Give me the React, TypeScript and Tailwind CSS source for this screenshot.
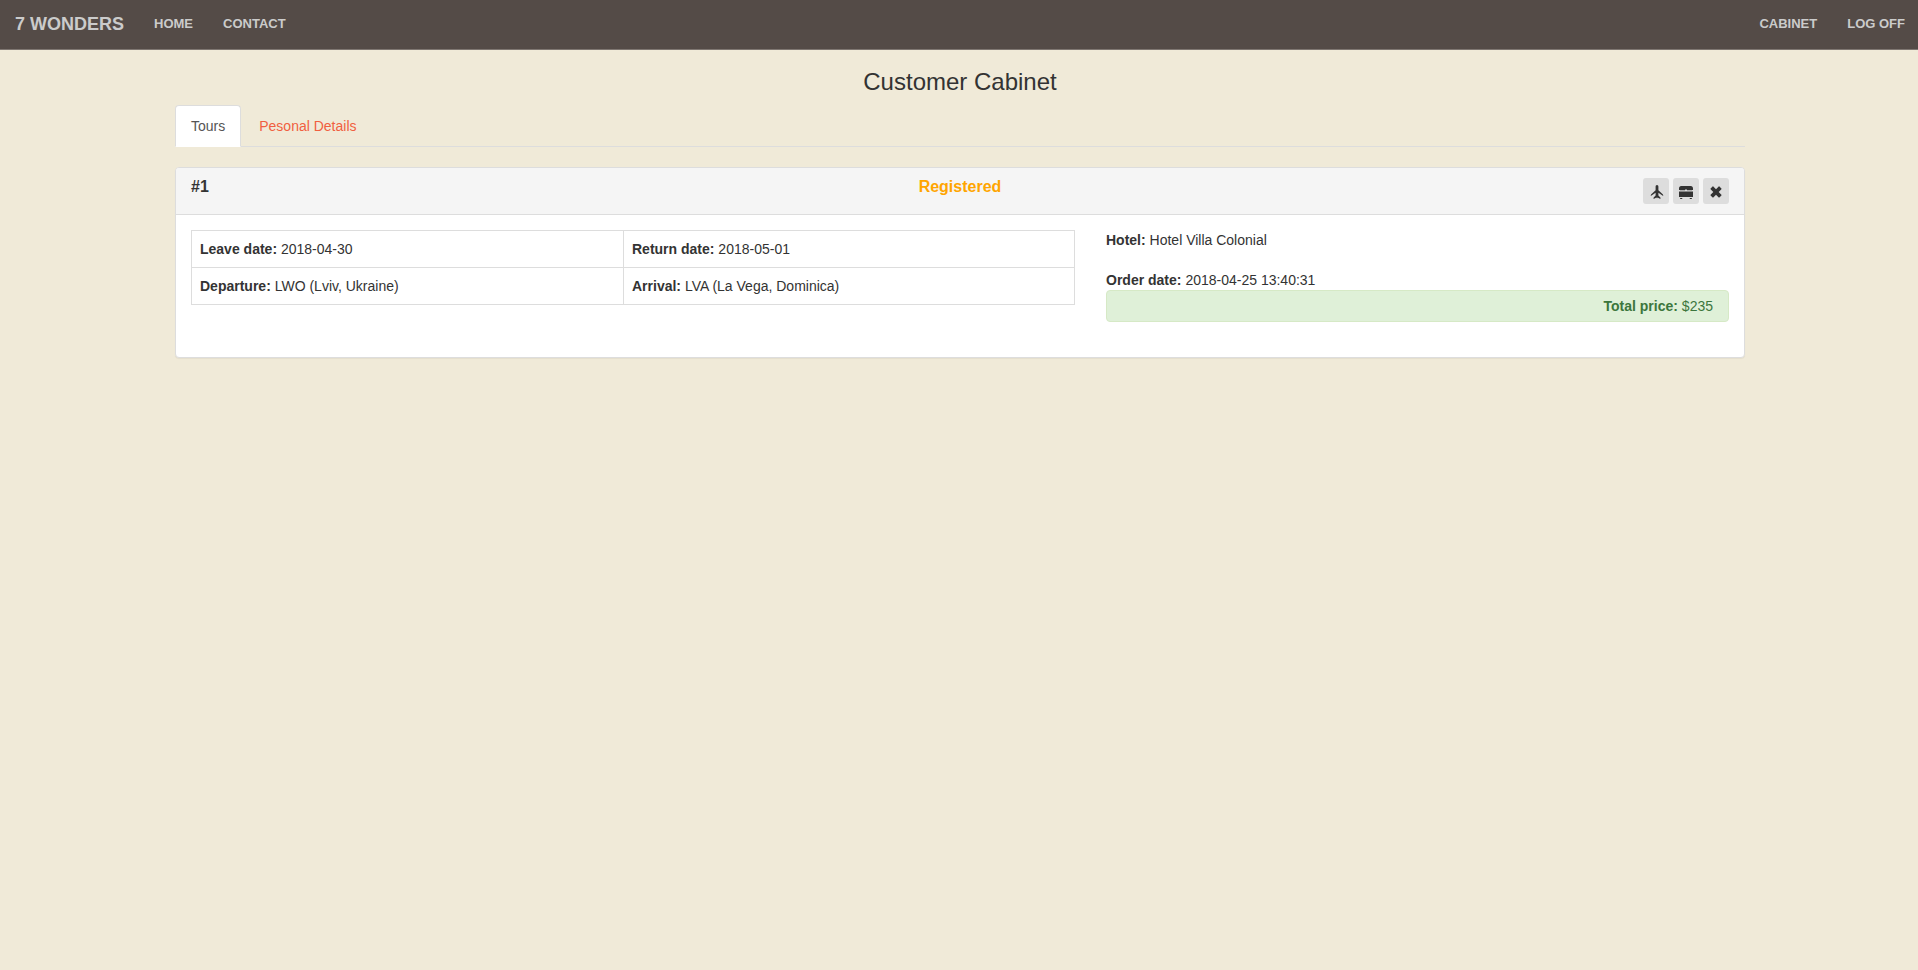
import type { ReactNode } from "react";

function NavLink({ children }: { children: ReactNode }) {
  return (
    <a href="#" className="px-[15px] py-[15px] text-[13px] leading-[17px] font-bold text-[#cbcbcb] uppercase">
      {children}
    </a>
  );
}

function IconButton({ label, children }: { label: string; children: ReactNode }) {
  return (
    <button aria-label={label} className="flex size-[26px] items-center justify-center rounded-[3px] bg-[#ddd] pt-[2px] text-[#333]">
      {children}
    </button>
  );
}

function Field({ name, value }: { name: string; value: string }) {
  return (
    <>
      <b>{name}:</b> {value}
    </>
  );
}

export default function App() {
  return (
    <div className="min-h-screen bg-[#f0ead8] font-['Liberation_Sans',Arial,sans-serif] text-sm leading-5 text-[#333]">
      <nav className="flex h-[50px] items-start justify-between border-b border-[#7f7772] bg-[#544b47]">
        <div className="flex">
          <a href="#" className="p-[15px] text-lg leading-[18px] font-bold text-[#cbcbcb]">7 WONDERS</a>
          <NavLink>Home</NavLink>
          <NavLink>Contact</NavLink>
        </div>
        <div className="-mr-[2px] flex">
          <NavLink>Cabinet</NavLink>
          <NavLink>Log off</NavLink>
        </div>
      </nav>
      <main className="ml-[175px] w-[1570px]">
        <h3 className="pt-[19px] pb-[10px] text-center text-2xl leading-[26px]">Customer Cabinet</h3>
        <div className="flex border-b border-[#ddd]">
          <a href="#" className="-mb-px mr-[2px] rounded-t border border-[#ddd] border-b-white bg-white px-[15px] py-[10px] text-[#555]">Tours</a>
          <a href="#" className="-mb-px border border-transparent px-[15px] py-[10px] text-[#f05f40]">Pesonal Details</a>
        </div>
        <section className="mt-5 h-[191px] rounded border border-[#ddd] bg-white shadow-[0_1px_1px_rgba(0,0,0,0.05)]">
          <header className="grid h-[47px] grid-cols-3 rounded-t-[3px] border-b border-[#ddd] bg-[#f5f5f5] px-[15px] pt-[10px] text-base leading-[18px] font-bold">
            <span>#1</span>
            <span className="text-center text-[#ffa500]">Registered</span>
            <div className="flex justify-end gap-1">
              <IconButton label="Flight">
                <svg width="14" height="14" viewBox="0 0 14 14" fill="currentColor" overflow="visible">
                  <path d="M8 0c.9 0 1.400.8 1.400 1.800V5.200l4.300 4c.4.4.5.8.5 1.700L9.400 7.800v2.700l2 1.900V14L8.500 12.600 8 13.600l-.5-1L4.600 14v-1.600l2-1.900V7.800L1.800 10.900c0-.9.1-1.300.5-1.700l4.300-4V1.800C6.600.8 7.100 0 8 0z" />
                </svg>
              </IconButton>
              <IconButton label="Hotel">
                <svg width="14" height="14" viewBox="0 0 14 14" fill="currentColor">
                  <path d="M2.200 1h9.600C13.200 1 14 2.200 14 3.500V5H8V4.500H6V5H0V3.500C0 2.200.8 1 2.200 1zM1 5h5v.3H1zM8 5h5v.3H8zM0 6.500h14V12H0zM1 13h2.500l-.5 1H1.300zM10.500 13H13l-.3 1H11z" />
                </svg>
              </IconButton>
              <IconButton label="Cancel">
                <svg width="14" height="14" viewBox="0 0 14 14" fill="currentColor">
                  <path d="M3.600 1.500c.2-.2.5-.2.7 0L7 4.200l2.700-2.700c.2-.2.5-.2.7 0l2 2c.2.2.2.5 0 .7L9.700 7l2.700 2.700c.2.2.2.5 0 .7l-2 2c-.2.2-.5.2-.7 0L7 9.700l-2.700 2.700c-.2.2-.5.2-.7 0l-2-2c-.2-.2-.2-.5 0-.7L4.300 7 1.600 4.200c-.2-.2-.2-.5 0-.7z" />
                </svg>
              </IconButton>
            </div>
          </header>
          <div className="flex gap-[31px] p-[15px]">
            <table className="h-[75px] w-[884px] table-fixed border-collapse">
              <tbody>
                <tr>
                  <td className="w-[432px] border border-[#ddd] p-2"><Field name="Leave date" value="2018-04-30" /></td>
                  <td className="border border-[#ddd] p-2"><Field name="Return date" value="2018-05-01" /></td>
                </tr>
                <tr>
                  <td className="border border-[#ddd] p-2"><Field name="Departure" value="LWO (Lviv, Ukraine)" /></td>
                  <td className="border border-[#ddd] p-2"><Field name="Arrival" value="LVA (La Vega, Dominica)" /></td>
                </tr>
              </tbody>
            </table>
            <div className="flex-1">
              <p className="mb-5"><Field name="Hotel" value="Hotel Villa Colonial" /></p>
              <p><Field name="Order date" value="2018-04-25 13:40:31" /></p>
              <p className="rounded border border-[#d6e9c6] bg-[#dff0d8] px-[15px] py-[5px] text-right text-[#3c763d]"><Field name="Total price" value="$235" /></p>
            </div>
          </div>
        </section>
      </main>
    </div>
  );
}
